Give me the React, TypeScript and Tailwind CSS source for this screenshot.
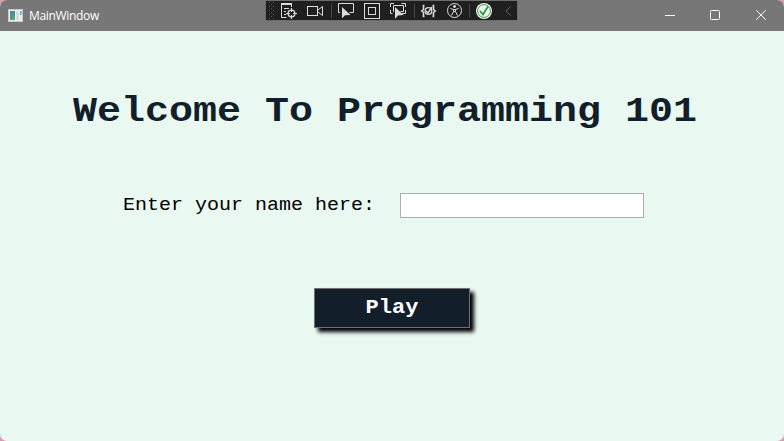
import React from 'react';

function DebugToolbar() {
  return (
    <div className="flex h-[21px] w-[253px] border border-[#6a6d6a] bg-[#1f1f1f]">
      <svg className="-mt-px -ml-px block shrink-0" width="253" height="21" viewBox="265 0 253 21" fill="none" stroke="#dcdcdc">
        <g fill="#5d5d5d" stroke="none">
          {[2, 6, 10, 14, 18].map((y) => (
            <g key={y}>
              <rect x="269" y={y} width="1" height="1" />
              <rect x="273" y={y} width="1" height="1" />
              <rect x="271" y={y + 2} width="1" height="1" />
            </g>
          ))}
        </g>
        <path d="M281.5 3v14.5h5M291.5 3v4M284 8.5h5M284 11.5h2M284 14.5h2" />
        <path d="M281 4h11" strokeWidth="2" />
        <circle cx="291.5" cy="13.5" r="3.4" strokeWidth="1.3" />
        <path d="M291.5 8v4M291.5 15v4M286 13.5h4M293 13.5h4" strokeWidth="1.2" />
        <rect x="307.5" y="6.5" width="10" height="9" />
        <path d="M318 10l4.500-3.500v9l-4.500-3.500" />
        <path d="M331.500 4v14M414.500 4v14M469.500 4v14" stroke="#484848" />
        <path d="M340 12.500h-1.500v-9h15v9h-4" />
        <path d="M342 7v11.500l3-3.200 5.500-.3z" fill="#dcdcdc" stroke="none" />
        <rect x="364.500" y="3.500" width="15" height="15" />
        <rect x="368.500" y="7.500" width="7" height="7" />
        <path d="M390.500 7v-3.500h3.500M401.500 3.500h4V7M390.500 10v3.500h2M405.500 10v3.500h-4M394 11.500h-.5V5.500h10V11.500h-3" />
        <path d="M395 7v12l3-3.500 5.500-.5z" fill="#dcdcdc" stroke="none" />
        <path d="M424.500 5.500h-1v4l-1.700 1.500 1.700 1.500v4h1M432.500 5.500h1v4l1.700 1.500-1.700 1.500v4h-1" strokeWidth="1.6" />
        <circle cx="428.500" cy="11" r="3.300" strokeWidth="1.3" />
        <path d="M426 11l2 2 4-6" strokeWidth="1.4" />
        <circle cx="454.500" cy="10.500" r="7" />
        <circle cx="454.500" cy="6.500" r="1.400" fill="#dcdcdc" stroke="none" />
        <path d="M450.500 8.500l3 1v2l-2 4M458.500 8.500l-3 1v2l2 4M453.500 9.500h2M453.500 11.500h2" />
        <circle cx="484" cy="11" r="8" fill="#f3f3f3" stroke="none" />
        <circle cx="484" cy="11" r="6.400" stroke="#379d42" />
        <path d="M480 11l3 3.500 5-8" stroke="#27972e" strokeWidth="1.7" />
        <path d="M510.500 6.500L506 11l4.500 4.500" stroke="#636363" />
      </svg>
    </div>
  );
}

function TitleBar() {
  return (
    <header className="flex h-[31px] shrink-0 items-start bg-[#777777] text-white">
      <div className="flex h-[31px] w-[265px] items-center pl-2">
        <svg width="15" height="13" viewBox="0 0 15 13" className="mr-[6px]">
          <defs>
            <linearGradient id="screen" x1="0" y1="0" x2="0.6" y2="1">
              <stop offset="0" stopColor="#477eb6" />
              <stop offset="1" stopColor="#51a876" />
            </linearGradient>
          </defs>
          <rect x=".5" y=".5" width="14" height="12" fill="#edf0f2" stroke="#c6c9cb" />
          <rect x="2" y="2" width="5" height="9" fill="url(#screen)" />
          <rect x="8" y="2" width="3" height="9" fill="#d5dce1" />
          <rect x="12" y="2" width="2" height="4" fill="#83b8b8" />
        </svg>
        <span className="font-['Open_Sans','Noto_Sans',sans-serif] text-[12px] leading-[16px] tracking-[-0.32px]">MainWindow</span>
      </div>
      <DebugToolbar />
      <div className="ml-auto flex h-[31px] w-[137px] items-center">
        <svg width="137" height="31" viewBox="647 0 137 31" fill="none" stroke="#ffffff">
          <path d="M665 15.500h10" />
          <rect x="710.500" y="10.500" width="9" height="9" rx="1" />
          <path d="M756.300 10.300l9.400 9.400M765.700 10.300l-9.400 9.400" />
        </svg>
      </div>
    </header>
  );
}

export default function App() {
  return (
    <div className="h-[441px] w-[784px] overflow-hidden bg-[#d998b4]">
      <div className="flex h-full flex-col overflow-hidden rounded-[7px] bg-[#e9f9f2] font-['Liberation_Mono','Courier_New',monospace]">
        <TitleBar />
        <main className="flex flex-col">
          <h1 className="mt-[50px] origin-[0_41px] scale-y-[0.87] pl-[73px] text-[40px] leading-[60px] font-bold whitespace-nowrap text-[#121f2b]">
            Welcome To Programming 101
          </h1>
          <div className="mt-[52px] flex h-[25px] pl-[123px]">
            <label htmlFor="name" className="h-6 w-[277px] origin-[0_17px] scale-y-[0.9] text-[20px] leading-[24px] whitespace-nowrap text-black">
              Enter your name here:
            </label>
            <input id="name" className="h-[25px] w-[244px] border border-[#abadb3] bg-white px-1 text-[20px] outline-none" />
          </div>
          <button className="mt-[70px] ml-[314px] h-[40px] w-[156px] border border-[#707070] bg-[#121f2b] text-[22px] leading-[38px] font-bold text-white shadow-[4px_4px_4px_#000000]">
            <span className="block origin-[0_25px] scale-y-[0.9]">Play</span>
          </button>
        </main>
      </div>
    </div>
  );
}
